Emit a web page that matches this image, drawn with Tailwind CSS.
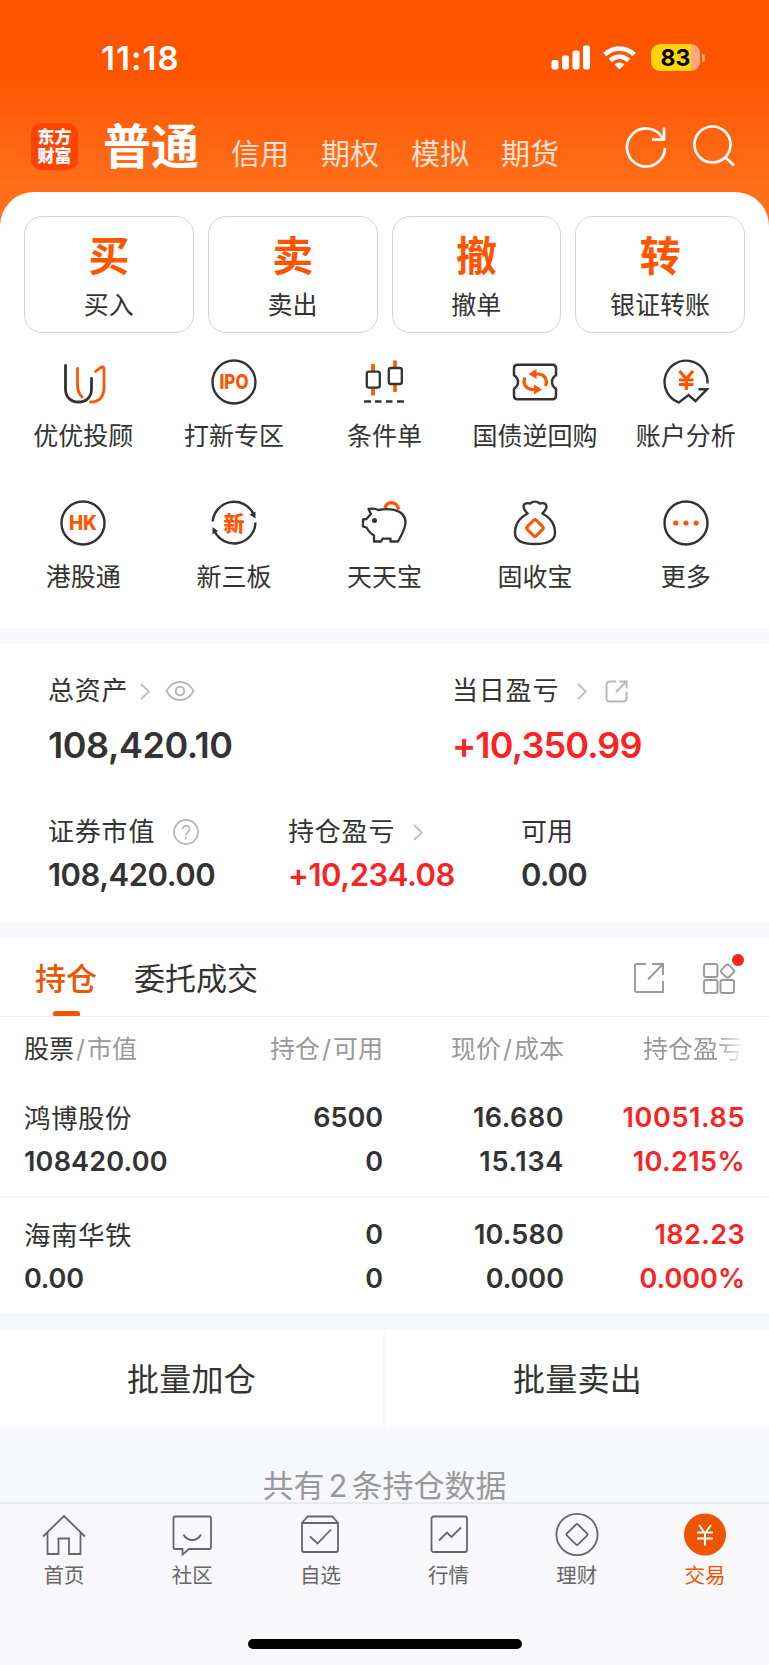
<!DOCTYPE html>
<html lang="zh-CN">
<head>
  <meta charset="UTF-8">
  <meta name="viewport" content="width=device-width, initial-scale=1.0">
  <title>交易 - 东方财富</title>
  <script src="https://cdn.jsdelivr.net/npm/@tailwindcss/browser@4"></script>
</head>
<body class="bg-[#f7f8fb] text-[#333] font-['Inter','Noto_Sans_CJK_SC',sans-serif] w-[769px] h-[1665px] overflow-hidden flex flex-col">

  <!-- Header -->
  <header class="h-[232px] -mb-10 shrink-0 text-white bg-linear-to-b from-[#ff5500] from-[32%] to-[#ff701a] to-[84%]">
    <!-- Status bar -->
    <div class="h-[115px] pl-[101px] pr-[64px] flex items-center justify-between">
      <span class="text-[33px] leading-[40px] font-semibold tracking-[1px]">11:18</span>
      <div class="flex items-center">
        <svg class="w-[39px] h-[25px] mr-[13px]" viewBox="0 0 39 25" fill="currentColor">
          <rect x="0.5" y="15" width="7" height="9.5" rx="2" />
          <rect x="11" y="10.5" width="7" height="14" rx="2" />
          <rect x="21.5" y="5.5" width="7" height="19" rx="2" />
          <rect x="32" y="0.5" width="7" height="24" rx="2" />
        </svg>
        <svg class="w-[33px] h-[25px] mr-[15px]" viewBox="0 0 33 25" fill="none" stroke="currentColor" stroke-width="4.6">
          <path d="M1.8 9.6a21 21 0 0 1 29.4 0" />
          <path d="M7.4 15.5a13 13 0 0 1 18.2 0" />
          <path d="M16.5 24.5l-5-5a7 7 0 0 1 10 0z" fill="currentColor" stroke="none" />
        </svg>
        <div class="w-[49px] h-[27px] rounded-[9px] bg-linear-to-r from-[#ffd60a] from-[82%] to-[#ffa880] to-[82%] text-black text-[23px] leading-[28px] font-bold text-center">83</div>
        <div class="w-[3px] h-[8px] ml-[2px] rounded-r-full bg-[#ffa880]"></div>
      </div>
    </div>

    <!-- Account tabs -->
    <div class="h-[77px] pl-[31px] pr-[32px] flex items-center">
      <div class="w-[47px] h-[47px] mt-[-14px] rounded-[10px] bg-[#ff4400] flex items-center justify-center text-[17px] leading-[19px] font-black">
        <span>东方<br>财富</span>
      </div>
      <nav class="ml-[25px] mt-[2px] flex text-[29px] leading-[50px] text-white/80 gap-8">
        <span class="text-[48px] font-bold text-white mt-[-8px]">普通</span>
        <span>信用</span>
        <span>期权</span>
        <span>模拟</span>
        <span>期货</span>
      </nav>
      <svg class="w-[44px] h-[44px] ml-auto mt-[-14px]" viewBox="0 0 44 44" fill="none" stroke="currentColor" stroke-width="2.7">
        <path d="M41 23A19 19 0 1 1 38.5 13" />
        <path d="M40 2.5v12H28" />
      </svg>
      <svg class="w-[44px] h-[44px] ml-[25px] mt-[-14px]" viewBox="0 0 44 44" fill="none" stroke="currentColor" stroke-width="2.7">
        <circle cx="19.5" cy="19.5" r="18" />
        <path d="M32 32l9 8.5" />
      </svg>
    </div>
  </header>

  <!-- Trade entry points -->
  <section class="h-[436px] shrink-0 bg-white rounded-t-[34px] pt-[24px]">
    <div class="px-6 grid grid-cols-4 gap-[14px] text-center">
      <div class="h-[117px] border border-[#d4d4d4] rounded-[18px] pt-[17px]">
        <div class="text-[41px] leading-[44px] font-bold text-[#ff5500]">买</div>
        <div class="text-[25px] leading-[32px] mt-[11px]">买入</div>
      </div>
      <div class="h-[117px] border border-[#d4d4d4] rounded-[18px] pt-[17px]">
        <div class="text-[41px] leading-[44px] font-bold text-[#ff5500]">卖</div>
        <div class="text-[25px] leading-[32px] mt-[11px]">卖出</div>
      </div>
      <div class="h-[117px] border border-[#d4d4d4] rounded-[18px] pt-[17px]">
        <div class="text-[41px] leading-[44px] font-bold text-[#ff5500]">撤</div>
        <div class="text-[25px] leading-[32px] mt-[11px]">撤单</div>
      </div>
      <div class="h-[117px] border border-[#d4d4d4] rounded-[18px] pt-[17px]">
        <div class="text-[41px] leading-[44px] font-bold text-[#ff5500]">转</div>
        <div class="text-[25px] leading-[32px] mt-[11px]">银证转账</div>
      </div>
    </div>

    <div class="mt-[26px] px-2 grid grid-cols-5 gap-y-[48px] text-[25px] leading-[32px] text-center whitespace-nowrap">
      <div class="flex flex-col items-center gap-[15px]">
        <svg class="w-[46px] h-[46px]" viewBox="0 0 46 46" fill="none" stroke="#333" stroke-width="2.8" stroke-linecap="round">
          <path d="M5.5 6.5V30c0 8 5 13 13 13s13-5 13-13V19.5" />
          <path d="M17.5 9.5V26c0 6 1.5 9 4.5 12" stroke="#ff5500" />
          <path d="M35.5 12.5l5.5-4.2q3-1.5 3 1.5V28c0 9.5-4.5 15-13.5 15" stroke="#ff5500" />
        </svg>
        <span>优优投顾</span>
      </div>
      <div class="flex flex-col items-center gap-[15px]">
        <svg class="w-[46px] h-[46px]" viewBox="0 0 46 46">
          <circle cx="23" cy="23" r="21.5" fill="none" stroke="#333" stroke-width="2.4" />
          <text x="23" y="30" text-anchor="middle" textLength="29" lengthAdjust="spacingAndGlyphs" class="text-[20px] font-extrabold fill-[#ff5500]">IPO</text>
        </svg>
        <span>打新专区</span>
      </div>
      <div class="flex flex-col items-center gap-[15px]">
        <svg class="w-[46px] h-[46px]" viewBox="0 0 46 46" fill="none" stroke="#333" stroke-width="2.3">
          <path d="M12 5v8M12 29v7.5M34 1.5v7.5M34 25v8" stroke="#ff5500" stroke-width="3.6" />
          <rect x="5.8" y="12.6" width="13" height="16" rx="2" />
          <rect x="27.8" y="9" width="13" height="16" rx="2" />
          <path d="M3 42.5h7M14 42.5h6.5M25 42.5h6.5M36 42.5h7" stroke-width="2.6" />
        </svg>
        <span>条件单</span>
      </div>
      <div class="flex flex-col items-center gap-[15px]">
        <svg class="w-[46px] h-[46px]" viewBox="0 0 46 46" fill="none" stroke="#333" stroke-width="2.5" stroke-linejoin="round">
          <path d="M5.5 5.8h35q3.500 0 3.500 3.500v7q-4 2.500-4 6.700t4 6.700v7q0 3.500-3.500 3.500h-35q-3.500 0-3.500-3.500v-7q4-2.500 4-6.700t-4-6.700v-7q0-3.500 3.500-3.500z" />
          <path d="M13 18.5c-2.500 6 .5 11.500 7 12h5M33.500 27c2.500-6-.5-11.500-7-12h-5" stroke="#ff5500" stroke-width="3.2" />
          <path d="M16.500 15l8-5v10zM30 30.500l-8-5v10z" fill="#ff5500" stroke="none" />
        </svg>
        <span>国债逆回购</span>
      </div>
      <div class="flex flex-col items-center gap-[15px]">
        <svg class="w-[46px] h-[46px]" viewBox="0 0 46 46" fill="none" stroke="#333" stroke-width="2.4">
          <path d="M44.5 24.5A21.5 21.5 0 1 0 16 43.500l9.500-7.500 7 6L44 30.300h-8.500" />
          <path d="M16.5 12l6.800 8 6.700-8M16 21h14.500M16 25.500h14.500M23.300 19.500v11.500" stroke="#ff5500" stroke-width="3.2" />
        </svg>
        <span>账户分析</span>
      </div>

      <div class="flex flex-col items-center gap-[15px]">
        <svg class="w-[46px] h-[46px]" viewBox="0 0 46 46">
          <circle cx="23" cy="23" r="21.5" fill="none" stroke="#333" stroke-width="2.4" />
          <text x="23" y="30" text-anchor="middle" textLength="28" lengthAdjust="spacingAndGlyphs" class="text-[20px] font-extrabold fill-[#ff5500]">HK</text>
        </svg>
        <span>港股通</span>
      </div>
      <div class="flex flex-col items-center gap-[15px]">
        <svg class="w-[46px] h-[46px]" viewBox="0 0 46 46" fill="none" stroke="#333" stroke-width="2.4">
          <path d="M1.7 21.5A21.5 21.5 0 0 1 42.500 14M44.500 22.500A21.500 21.500 0 0 1 3.500 31" />
          <path d="M44.5 11.5v7l-6-4zM1.500 34.500v-7.500l5.500 4z" fill="#333" stroke="none" />
          <text x="23" y="30.5" text-anchor="middle" stroke="none" class="text-[21px] font-black fill-[#ff5500]">新</text>
        </svg>
        <span>新三板</span>
      </div>
      <div class="flex flex-col items-center gap-[15px]">
        <svg class="w-[46px] h-[46px]" viewBox="0 0 46 46" fill="none" stroke="#333" stroke-width="2.3" stroke-linejoin="round">
          <path d="M24 8c2-7.500 11.500-7.500 13.700 1.500" stroke="#ff5500" stroke-width="3.2" />
          <path d="M7.500 9c4-.8 7-.5 10 1 5-1 10-1.200 15.500-.2C40 11 44.500 16 44.500 22c0 7-3.500 12-7.500 19.500h-7.500v-2.800h-8l-1.500 2.800h-7V35.500c-4-2-5.500-4.500-7.500-8L2 26.500v-7l3.500-.5L10 14z" />
          <circle cx="13.5" cy="20.5" r="2.5" fill="#333" stroke="none" />
        </svg>
        <span>天天宝</span>
      </div>
      <div class="flex flex-col items-center gap-[15px]">
        <svg class="w-[46px] h-[46px]" viewBox="0 0 46 46" fill="none" stroke="#333" stroke-width="2.4" stroke-linejoin="round">
          <path d="M15.5 13.5c-2.500-2.500-4.500-5-3.800-8 .8-2.500 3.800-2.700 6.800-2 2-2.500 7-2.500 9 0 3-.7 6-.5 6.800 2 .7 3-1.300 5.500-3.800 8" />
          <path d="M16.5 13C8.500 17 3 23.500 3 33c0 7.500 7 11 20 11s20-3.500 20-11c0-9.500-5.500-16-13.500-20" />
          <rect x="16.6" y="21.6" width="12.8" height="12.8" rx="2" transform="rotate(45 23 28)" stroke="#ff5500" stroke-width="3" />
        </svg>
        <span>固收宝</span>
      </div>
      <div class="flex flex-col items-center gap-[15px]">
        <svg class="w-[46px] h-[46px]" viewBox="0 0 46 46" fill="#ff5500">
          <circle cx="23" cy="23" r="21.5" fill="none" stroke="#333" stroke-width="2.4" />
          <circle cx="12.8" cy="23" r="2.6" />
          <circle cx="23" cy="23" r="2.6" />
          <circle cx="33.2" cy="23" r="2.6" />
        </svg>
        <span>更多</span>
      </div>
    </div>
  </section>

  <!-- Assets -->
  <section class="mt-4 h-[279px] shrink-0 bg-white pt-[31px] px-12">
    <div class="grid grid-cols-[404px_1fr]">
      <div>
        <div class="h-8 flex items-center text-[26px] leading-8 tracking-[0.8px]">
          总资产
          <svg class="w-[10px] h-[17px] ml-[12px]" viewBox="0 0 10 17" fill="none" stroke="#bfbfbf" stroke-width="1.8"><path d="M1 1l8 7.5L1 16" /></svg>
          <svg class="w-[30px] h-[22px] ml-[15px]" viewBox="0 0 30 22" fill="none" stroke="#b8b8b8" stroke-width="2">
            <path d="M1.5 11C8-1 22-1 28.5 11 22 23 8 23 1.5 11z" />
            <circle cx="15" cy="11" r="4.2" />
          </svg>
        </div>
        <div class="mt-4 text-[36px] leading-[44px] font-semibold tracking-[-0.45px]">108,420.10</div>
      </div>
      <div>
        <div class="h-8 flex items-center text-[26px] leading-8 tracking-[0.8px]">
          当日盈亏
          <svg class="w-[10px] h-[17px] ml-[18px]" viewBox="0 0 10 17" fill="none" stroke="#bfbfbf" stroke-width="1.8"><path d="M1 1l8 7.5L1 16" /></svg>
          <svg class="w-[23px] h-[23px] ml-[18px]" viewBox="0 0 23 23" fill="none" stroke="#b8b8b8" stroke-width="2">
            <path d="M11 1.5H5Q1.5 1.5 1.5 5v13q0 3.500 3.500 3.500h13q3.500 0 3.500-3.500v-6.500M11 12L21.500 1.500M14.500 1.500h7v7" />
          </svg>
        </div>
        <div class="mt-4 text-[36px] leading-[44px] font-semibold tracking-[-0.85px] text-[#fa2323]">+10,350.99</div>
      </div>
    </div>

    <div class="mt-[49px] grid grid-cols-[240px_233px_1fr]">
      <div>
        <div class="h-8 flex items-center text-[26px] leading-8 tracking-[0.8px]">
          证券市值
          <svg class="w-[26px] h-[26px] ml-[18px]" viewBox="0 0 26 26" fill="none" stroke="#b8b8b8" stroke-width="1.8">
            <circle cx="13" cy="13" r="12" />
            <path d="M9.5 10.2c0-4.4 7-4.4 7 0 0 2.800-3.500 3-3.500 6.300M13 18v2.300" />
          </svg>
        </div>
        <div class="mt-[9px] text-[31px] leading-9 font-semibold tracking-[-0.5px]">108,420.00</div>
      </div>
      <div>
        <div class="h-8 flex items-center text-[26px] leading-8 tracking-[0.8px]">
          持仓盈亏
          <svg class="w-[10px] h-[17px] ml-[18px]" viewBox="0 0 10 17" fill="none" stroke="#bfbfbf" stroke-width="1.8"><path d="M1 1l8 7.5L1 16" /></svg>
        </div>
        <div class="mt-[9px] text-[31px] leading-9 font-semibold tracking-[-0.45px] text-[#fa2323]">+10,234.08</div>
      </div>
      <div>
        <div class="h-8 text-[26px] leading-8">可用</div>
        <div class="mt-[9px] text-[31px] leading-9 font-semibold tracking-[-0.9px]">0.00</div>
      </div>
    </div>
  </section>

  <!-- Positions -->
  <section class="mt-4 h-[374px] shrink-0 bg-white">
    <div class="h-[78px] border-b border-[#eee] pl-[35px] pr-[34px] flex">
      <div class="relative pt-5 text-[31px] leading-10 font-medium text-[#ee5500]">
        持仓
        <div class="absolute left-[18px] bottom-0 w-[27px] h-[5px] rounded-t-[3px] rounded-b-[1px] bg-[#ee5500]"></div>
      </div>
      <div class="pt-5 ml-[37px] text-[31px] leading-10">委托成交</div>
      <svg class="w-[30px] h-[30px] mt-[24px] ml-auto" viewBox="0 0 30 30" fill="none" stroke="#999" stroke-width="1.9">
        <path d="M12 1H2.5Q1 1 1 2.5v25Q1 29 2.5 29H29V18M14 16.5L29 1M18 1h11v11" />
      </svg>
      <div class="relative ml-[39px] mt-[24px]">
        <svg class="w-[32px] h-[31px]" viewBox="0 0 32 31" fill="none" stroke="#999" stroke-width="1.9">
          <rect x="1" y="1" width="13.5" height="13" rx="2" />
          <rect x="1" y="17" width="13.5" height="13" rx="2" />
          <rect x="17.5" y="17" width="13.5" height="13" rx="2" />
          <rect x="19.3" y="2.8" width="10.5" height="10.5" rx="2.5" transform="rotate(45 24.5 8)" />
        </svg>
        <div class="absolute left-[29px] top-[-9px] w-3 h-3 rounded-full bg-[#fa2323]"></div>
      </div>
    </div>

    <div class="h-[63px] px-6 grid grid-cols-[178px_181px_181px_181px] text-right text-[25px] leading-[64px] text-[#999] whitespace-nowrap">
      <div class="text-left"><span class="text-[#333]">股票</span><span class="mx-[2px]">/</span>市值</div>
      <div>持仓<span class="mx-[2px]">/</span>可用</div>
      <div>现价<span class="mx-[2px]">/</span>成本</div>
      <div class="pr-[2px] mask-r-from-[85%] mask-r-to-100%">持仓盈亏</div>
    </div>

    <div class="h-[117px] px-6 border-b border-[#eee] grid grid-cols-[178px_181px_181px_181px] content-start pt-[16px] text-right text-[27px] leading-[44px] font-semibold">
      <div class="text-left text-[26.5px] font-normal tracking-[0.5px]">鸿博股份</div>
      <div>6500</div>
      <div class="tracking-[0.5px]">16.680</div>
      <div class="tracking-[0.6px] text-[#fa2323]">10051.85</div>
      <div class="text-left tracking-[0.2px]">108420.00</div>
      <div>0</div>
      <div class="tracking-[0.7px]">15.134</div>
      <div class="tracking-[0.4px] text-[#fa2323]">10.215%</div>
    </div>
    <div class="h-[116px] px-6 grid grid-cols-[178px_181px_181px_181px] content-start pt-[16px] text-right text-[27px] leading-[44px] font-semibold">
      <div class="text-left text-[26.5px] font-normal tracking-[0.5px]">海南华铁</div>
      <div>0</div>
      <div class="tracking-[0.2px]">10.580</div>
      <div class="tracking-[0.4px] text-[#fa2323]">182.23</div>
      <div class="text-left tracking-[-0.2px]">0.00</div>
      <div>0</div>
      <div>0.000</div>
      <div class="text-[#fa2323]">0.000%</div>
    </div>
  </section>

  <!-- Batch actions -->
  <section class="mt-4 h-[98px] shrink-0 grid grid-cols-[383px_1fr] grid-rows-[98px] gap-[3px] text-center text-[32px] leading-[40px] tracking-[0.3px]">
    <div class="bg-white pt-[31px]">批量加仓</div>
    <div class="bg-white pt-[31px]">批量卖出</div>
  </section>

  <div class="h-[75px] shrink-0 pt-[38px] text-center text-[31px] leading-[42px] text-[#999]">共有<span class="mx-[4px]">2</span>条持仓数据</div>

  <!-- Tab bar -->
  <footer class="flex-1 border-t-2 border-[#e9eaec] bg-[#f8f8fb]">
    <nav class="grid grid-cols-6 pt-[9px] text-[20.5px] leading-7 text-[#666] text-center">
      <div class="flex flex-col items-center gap-[5px]">
        <svg class="w-[44px] h-[44px]" viewBox="0 0 44 44" fill="none" stroke="currentColor" stroke-width="1.8">
          <path d="M1 23.5L22 3l21 20.5M5.5 19.5V41H16.500V25.500h10.500V41H38.500V19.500" />
        </svg>
        <span>首页</span>
      </div>
      <div class="flex flex-col items-center gap-[5px]">
        <svg class="w-[44px] h-[44px]" viewBox="0 0 44 44" fill="none" stroke="currentColor" stroke-width="1.8">
          <path d="M5 3.5h34.5q1.500 0 1.500 1.500v29.500q0 1.500-1.500 1.500H19l-6.500 5.500V36H5q-1.500 0-1.500-1.500V5q0-1.500 1.500-1.500zM13.500 21.500c4 7.500 13.500 7.500 17.500 0" />
        </svg>
        <span>社区</span>
      </div>
      <div class="flex flex-col items-center gap-[5px]">
        <svg class="w-[44px] h-[44px]" viewBox="0 0 44 44" fill="none" stroke="currentColor" stroke-width="1.8">
          <path d="M4 10l5-6q.5-.5 1.500-.5h23q1 0 1.500.5l5 6M4 10h36v27q0 2-2 2H6q-2 0-2-2zM12 23.500l7.500 7L33 16.500" />
        </svg>
        <span>自选</span>
      </div>
      <div class="flex flex-col items-center gap-[5px]">
        <svg class="w-[44px] h-[44px]" viewBox="0 0 44 44" fill="none" stroke="currentColor" stroke-width="1.8">
          <rect x="4.5" y="3.5" width="35.5" height="35.5" rx="2" />
          <path d="M12 27.5l8-8 4.500 4.500 9.500-9.500" />
        </svg>
        <span>行情</span>
      </div>
      <div class="flex flex-col items-center gap-[5px]">
        <svg class="w-[44px] h-[44px]" viewBox="0 0 44 44" fill="none" stroke="currentColor" stroke-width="1.8">
          <circle cx="22" cy="21.5" r="20.6" />
          <rect x="14.2" y="13.7" width="15.6" height="15.6" rx="1.5" transform="rotate(45 22 21.5)" />
        </svg>
        <span>理财</span>
      </div>
      <div class="flex flex-col items-center gap-[5px] text-[#ee5500]">
        <svg class="w-[44px] h-[44px]" viewBox="0 0 44 44" fill="none" stroke="#fff" stroke-width="2">
          <circle cx="22" cy="21.5" r="21" fill="#ee5500" stroke="none" />
          <path d="M16 12l6 8.5 6-8.500M14 19.500h16M14 25.500h16M22 19.500v13" />
        </svg>
        <span>交易</span>
      </div>
    </nav>
    <!-- Home indicator -->
    <div class="mx-auto mt-[49px] w-[274px] h-[10px] rounded-full bg-black"></div>
  </footer>

</body>
</html>
